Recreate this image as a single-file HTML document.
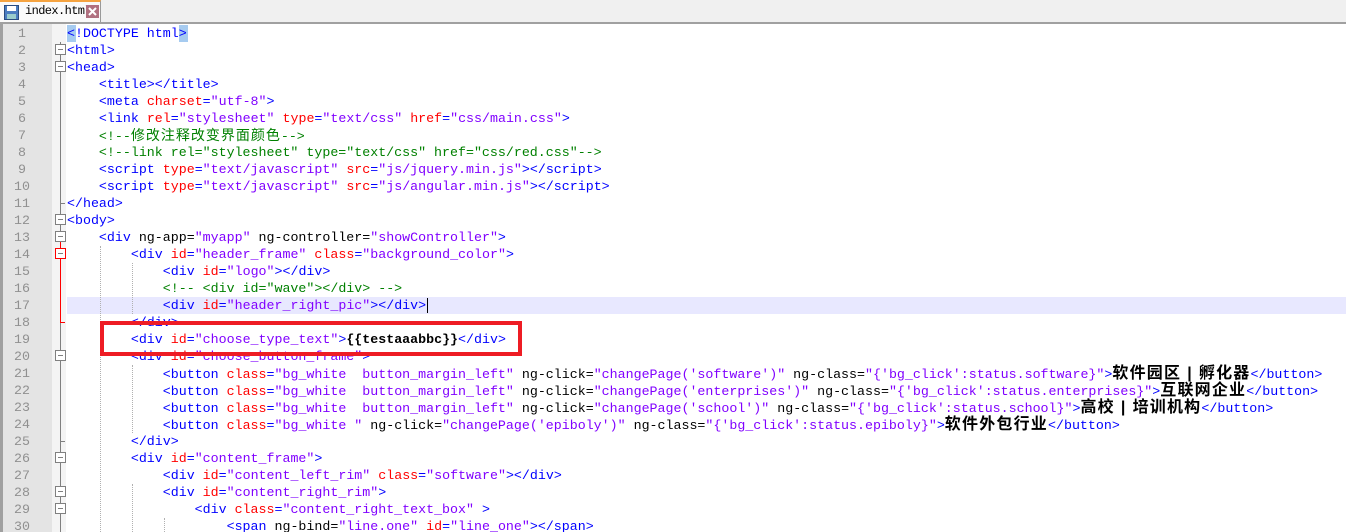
<!DOCTYPE html>
<html><head><meta charset="utf-8"><style>
html,body{margin:0;width:1346px;height:532px;overflow:hidden;}
body{background:#fff;position:relative;font-family:"Liberation Mono",monospace;}
#tabbar{position:absolute;left:0;top:0;width:1346px;height:22px;background:#f0f0f0;border-bottom:2px solid #a0a0a0;}
#tab{position:absolute;left:0;top:0;width:101px;height:22px;background:#fafafa;border-top:2px solid #f5a340;border-right:1px solid #999;box-sizing:border-box;font-size:12px;}
#tab span{position:absolute;left:25px;top:2px;font-family:"Liberation Mono","Noto Sans CJK SC",monospace;font-size:12px;letter-spacing:-0.6px}
#gut{position:absolute;left:0;top:24px;width:52px;height:508px;background:#e4e4e4;border-left:3px solid #a0a0a0;box-sizing:border-box}
#fold{position:absolute;left:52px;top:24px;width:14px;height:508px;background:#f4f4f4}
.ln{position:absolute;left:0;width:44px;text-align:center;color:#909090;font-size:13.3px;line-height:17px}
.l{position:absolute;left:67px;white-space:pre;font-size:13.3px;line-height:17px;color:#000}
.t{color:#0000ff}.a{color:#ff0000}.v{color:#8000ff}.c{color:#008000}
.b{font-family:"Liberation Sans","Noto Sans CJK SC",sans-serif;font-weight:bold;font-size:16px;letter-spacing:1.2px;color:#000}
.p{margin:0 6px}
.fb{position:absolute;left:55px;width:9px;height:9px;border:1px solid #808080;background:#fff;box-sizing:content-box}
.fb:after{content:"";position:absolute;left:2px;top:4px;width:5px;height:1px;background:#808080}
.vl{position:absolute;left:60px;width:1px;background:#808080}
.tk{position:absolute;left:60px;width:5px;height:1px;background:#808080}
.ig{position:absolute;width:0;border-left:1px dotted #b0b0b0}
</style></head><body>
<div id="tabbar"><div id="tab">
<svg style="position:absolute;left:4px;top:3px" width="15" height="15"><rect x="0.5" y="0.5" width="14" height="14" fill="#4a7cc0" stroke="#2a4c80"/><rect x="3" y="1" width="9" height="5" fill="#fff"/><rect x="3" y="9" width="9" height="5" fill="#9cc"/></svg>
<span>index.html</span>
<svg style="position:absolute;left:86px;top:3px" width="13" height="13"><rect width="13" height="13" fill="#b07080"/><path d="M3 3L10 10M10 3L3 10" stroke="#fff" stroke-width="2"/></svg>
</div></div>
<div id="gut"></div><div id="fold"></div>
<div style="position:absolute;left:67px;top:297px;width:1279px;height:17px;background:#e8e8ff"></div>
<div style="position:absolute;left:67px;top:25px;width:9px;height:17px;background:#a6cbf0"></div>
<div style="position:absolute;left:179px;top:25px;width:9px;height:17px;background:#a6cbf0"></div>
<div class="vl" style="top:42px;height:490px"></div>
<div class="vl" style="top:238px;height:85px;background:#f00"></div>
<div class="tk" style="top:203px"></div><div class="tk" style="top:322px;background:#f00"></div><div class="tk" style="top:441px"></div>
<div class="ig" style="left:100px;top:246px;height:286px"></div>
<div class="ig" style="left:132px;top:263px;height:51px"></div>
<div class="ig" style="left:132px;top:365px;height:68px"></div>
<div class="ig" style="left:132px;top:484px;height:48px"></div>
<div class="ig" style="left:164px;top:518px;height:14px"></div>
<div class="fb" style="top:44px"></div><div class="fb" style="top:61px"></div>
<div class="fb" style="top:214px"></div><div class="fb" style="top:231px"></div>
<div class="fb" style="top:248px;border-color:#f00"></div>
<div class="fb" style="top:350px"></div><div class="fb" style="top:452px"></div>
<div class="fb" style="top:486px"></div><div class="fb" style="top:503px"></div>
<div class="l" style="top:25px"><span class="t">&lt;!DOCTYPE html&gt;</span></div>
<div class="l" style="top:42px"><span class="t">&lt;html&gt;</span></div>
<div class="l" style="top:59px"><span class="t">&lt;head&gt;</span></div>
<div class="l" style="top:76px">    <span class="t">&lt;title&gt;&lt;/title&gt;</span></div>
<div class="l" style="top:93px">    <span class="t">&lt;meta </span><span class="a">charset</span><span class="t">=</span><span class="v">"utf-8"</span><span class="t">&gt;</span></div>
<div class="l" style="top:110px">    <span class="t">&lt;link </span><span class="a">rel</span><span class="t">=</span><span class="v">"stylesheet"</span> <span class="a">type</span><span class="t">=</span><span class="v">"text/css"</span> <span class="a">href</span><span class="t">=</span><span class="v">"css/main.css"</span><span class="t">&gt;</span></div>
<div class="l" style="top:127px">    <span class="c">&lt;!--<span style="font-family:'Noto Sans CJK SC',sans-serif;font-size:14px;letter-spacing:1px">修改注释改变界面颜色</span>--&gt;</span></div>
<div class="l" style="top:144px">    <span class="c">&lt;!--link rel="stylesheet" type="text/css" href="css/red.css"--&gt;</span></div>
<div class="l" style="top:161px">    <span class="t">&lt;script </span><span class="a">type</span><span class="t">=</span><span class="v">"text/javascript"</span> <span class="a">src</span><span class="t">=</span><span class="v">"js/jquery.min.js"</span><span class="t">&gt;&lt;/script&gt;</span></div>
<div class="l" style="top:178px">    <span class="t">&lt;script </span><span class="a">type</span><span class="t">=</span><span class="v">"text/javascript"</span> <span class="a">src</span><span class="t">=</span><span class="v">"js/angular.min.js"</span><span class="t">&gt;&lt;/script&gt;</span></div>
<div class="l" style="top:195px"><span class="t">&lt;/head&gt;</span></div>
<div class="l" style="top:212px"><span class="t">&lt;body&gt;</span></div>
<div class="l" style="top:229px">    <span class="t">&lt;div </span>ng-app=<span class="v">"myapp"</span> ng-controller=<span class="v">"showController"</span><span class="t">&gt;</span></div>
<div class="l" style="top:246px">        <span class="t">&lt;div </span><span class="a">id</span><span class="t">=</span><span class="v">"header_frame"</span> <span class="a">class</span><span class="t">=</span><span class="v">"background_color"</span><span class="t">&gt;</span></div>
<div class="l" style="top:263px">            <span class="t">&lt;div </span><span class="a">id</span><span class="t">=</span><span class="v">"logo"</span><span class="t">&gt;&lt;/div&gt;</span></div>
<div class="l" style="top:280px">            <span class="c">&lt;!-- &lt;div id="wave"&gt;&lt;/div&gt; --&gt;</span></div>
<div class="l" style="top:297px">            <span class="t">&lt;div </span><span class="a">id</span><span class="t">=</span><span class="v">"header_right_pic"</span><span class="t">&gt;&lt;/div&gt;</span></div>
<div style="position:absolute;left:427px;top:298px;width:1px;height:15px;background:#000"></div>
<div class="l" style="top:314px">        <span class="t">&lt;/div&gt;</span></div>
<div class="l" style="top:331px">        <span class="t">&lt;div </span><span class="a">id</span><span class="t">=</span><span class="v">"choose_type_text"</span><span class="t">&gt;</span><b>{{testaaabbc}}</b><span class="t">&lt;/div&gt;</span></div>
<div class="l" style="top:348px">        <span class="t">&lt;div </span><span class="a">id</span><span class="t">=</span><span class="v">"choose_button_frame"</span><span class="t">&gt;</span></div>
<div class="l" style="top:365px">            <span class="t">&lt;button </span><span class="a">class</span><span class="t">=</span><span class="v">"bg_white  button_margin_left"</span> ng-click=<span class="v">"changePage('software')"</span> ng-class=<span class="v">"{'bg_click':status.software}"</span><span class="t">&gt;</span><span class="b">软件园区<span class="p">|</span>孵化器</span><span class="t">&lt;/button&gt;</span></div>
<div class="l" style="top:382px">            <span class="t">&lt;button </span><span class="a">class</span><span class="t">=</span><span class="v">"bg_white  button_margin_left"</span> ng-click=<span class="v">"changePage('enterprises')"</span> ng-class=<span class="v">"{'bg_click':status.enterprises}"</span><span class="t">&gt;</span><span class="b">互联网企业</span><span class="t">&lt;/button&gt;</span></div>
<div class="l" style="top:399px">            <span class="t">&lt;button </span><span class="a">class</span><span class="t">=</span><span class="v">"bg_white  button_margin_left"</span> ng-click=<span class="v">"changePage('school')"</span> ng-class=<span class="v">"{'bg_click':status.school}"</span><span class="t">&gt;</span><span class="b">高校<span class="p">|</span>培训机构</span><span class="t">&lt;/button&gt;</span></div>
<div class="l" style="top:416px">            <span class="t">&lt;button </span><span class="a">class</span><span class="t">=</span><span class="v">"bg_white "</span> ng-click=<span class="v">"changePage('epiboly')"</span> ng-class=<span class="v">"{'bg_click':status.epiboly}"</span><span class="t">&gt;</span><span class="b">软件外包行业</span><span class="t">&lt;/button&gt;</span></div>
<div class="l" style="top:433px">        <span class="t">&lt;/div&gt;</span></div>
<div class="l" style="top:450px">        <span class="t">&lt;div </span><span class="a">id</span><span class="t">=</span><span class="v">"content_frame"</span><span class="t">&gt;</span></div>
<div class="l" style="top:467px">            <span class="t">&lt;div </span><span class="a">id</span><span class="t">=</span><span class="v">"content_left_rim"</span> <span class="a">class</span><span class="t">=</span><span class="v">"software"</span><span class="t">&gt;&lt;/div&gt;</span></div>
<div class="l" style="top:484px">            <span class="t">&lt;div </span><span class="a">id</span><span class="t">=</span><span class="v">"content_right_rim"</span><span class="t">&gt;</span></div>
<div class="l" style="top:501px">                <span class="t">&lt;div </span><span class="a">class</span><span class="t">=</span><span class="v">"content_right_text_box"</span> <span class="t">&gt;</span></div>
<div class="l" style="top:518px">                    <span class="t">&lt;span </span>ng-bind=<span class="v">"line.one"</span> <span class="a">id</span><span class="t">=</span><span class="v">"line_one"</span><span class="t">&gt;&lt;/span&gt;</span></div>
<div style="position:absolute;left:100px;top:321px;width:422px;height:35px;border:4px solid #ee1c24;box-sizing:border-box;background:transparent"></div>
<div style="position:absolute;left:0;top:0">
<div class="ln" style="top:25px">1</div><div class="ln" style="top:42px">2</div><div class="ln" style="top:59px">3</div><div class="ln" style="top:76px">4</div><div class="ln" style="top:93px">5</div><div class="ln" style="top:110px">6</div><div class="ln" style="top:127px">7</div><div class="ln" style="top:144px">8</div><div class="ln" style="top:161px">9</div><div class="ln" style="top:178px">10</div><div class="ln" style="top:195px">11</div><div class="ln" style="top:212px">12</div><div class="ln" style="top:229px">13</div><div class="ln" style="top:246px">14</div><div class="ln" style="top:263px">15</div><div class="ln" style="top:280px">16</div><div class="ln" style="top:297px">17</div><div class="ln" style="top:314px">18</div><div class="ln" style="top:331px">19</div><div class="ln" style="top:348px">20</div><div class="ln" style="top:365px">21</div><div class="ln" style="top:382px">22</div><div class="ln" style="top:399px">23</div><div class="ln" style="top:416px">24</div><div class="ln" style="top:433px">25</div><div class="ln" style="top:450px">26</div><div class="ln" style="top:467px">27</div><div class="ln" style="top:484px">28</div><div class="ln" style="top:501px">29</div><div class="ln" style="top:518px">30</div>
</div>
</body></html>
